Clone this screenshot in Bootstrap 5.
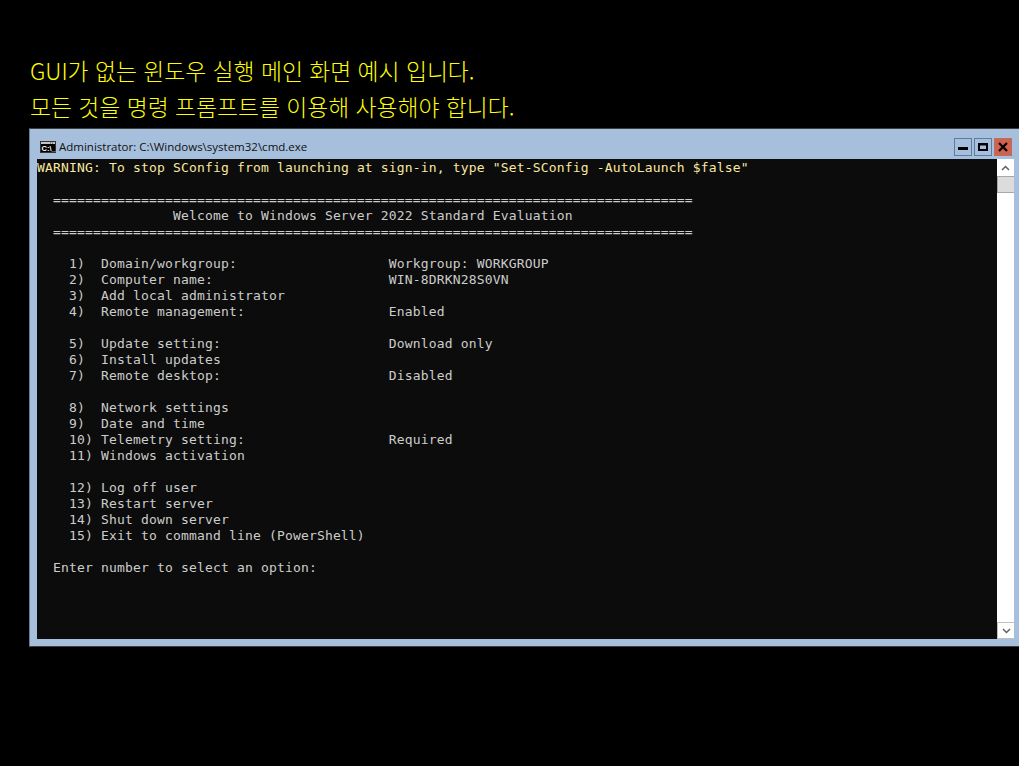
<!DOCTYPE html>
<html lang="ko">
<head>
<meta charset="utf-8">
<title>Windows Server Core SConfig</title>
<link href="https://cdn.jsdelivr.net/npm/bootstrap@5.3.0/dist/css/bootstrap.min.css" rel="stylesheet">
<style>
html,body{background:#000;height:100%;}
body{overflow:hidden;}
.caption-area{padding:53px 0 0 30px;height:128px;}
.caption-line{color:#ffff00;font-family:"Noto Sans CJK KR","Noto Sans",sans-serif;font-weight:300;font-size:22.8px;line-height:36px;margin:0;white-space:nowrap;}
.cmd-window{margin-left:29px;height:519px;background:#a6bfdc;border-top:1px solid #3c3c3c;border-left:1px solid #6b7a8c;border-bottom:1px solid #3c3c3c;}
.cmd-titlebar{height:30px;padding-left:10px;padding-right:7px;}
.cmd-title{font-family:"Open Sans","Liberation Sans",sans-serif;font-size:11.5px;color:#111;margin-left:3px;margin-top:10px;white-space:nowrap;line-height:16px;}
.cmd-icon{margin-top:12px;flex:none;}
.win-btn{width:18px;height:18px;border:1px solid #5f7c9e;margin-left:2px;margin-top:9px;padding:0;background:#a6bfdc;}
.win-btn svg{display:block;margin:0 auto;}
.win-btn-close{background:#d0624f;border-color:#b5735f;}
.cmd-body{padding-left:7px;}
.cmd-console{width:960px;height:480px;background:#0c0c0c;flex:none;overflow:hidden;}
.cmd-text{margin:0;padding:1px 0 0;color:#cccccc;font-family:"DejaVu Sans Mono",monospace;font-size:13px;letter-spacing:.17px;line-height:16px;overflow:hidden;}
.warn{color:#f9e8a0;}
.cmd-scroll{width:17px;height:480px;background:#fff;flex:none;}
.scroll-btn{height:17px;background:#fff;}
.scroll-thumb{height:17px;background:#dcdcdc;border:1px solid #a8a8a8;border-width:1px 0 1px 1px;}
.scroll-btn-down{border-top:1px solid #c0c0c0;border-left:1px solid #c0c0c0;border-bottom:1px solid #c0c0c0;}
</style>
</head>
<body class="m-0">
<header class="caption-area">
<p class="caption-line">GUI가 없는 윈도우 실행 메인 화면 예시 입니다.</p>
<p class="caption-line">모든 것을 명령 프롬프트를 이용해 사용해야 합니다.</p>
</header>
<section class="cmd-window">
<div class="cmd-titlebar d-flex align-items-start">
<svg class="cmd-icon" width="16" height="12" viewBox="0 0 16 12"><rect width="16" height="12" fill="#333"/><rect x="1" y="1" width="14" height="2" fill="#c4c4c4"/><rect x="10" y="1.500" width="1" height="1" fill="#444"/><rect x="12" y="1.500" width="1" height="1" fill="#444"/><rect x="1" y="3" width="14" height="8" fill="#000"/><text x="1.500" y="10" font-family="Liberation Sans" font-size="7.500" font-weight="700" fill="#fff">C:\_</text></svg>
<span class="cmd-title flex-grow-1">Administrator: C:\Windows\system32\cmd.exe</span>
<button class="win-btn" type="button" aria-label="Minimize"><svg width="10" height="10" viewBox="0 0 10 10"><rect x="0" y="5" width="10" height="3" fill="#000"/></svg></button>
<button class="win-btn" type="button" aria-label="Maximize"><svg width="10" height="10" viewBox="0 0 10 10"><path d="M0 1h10v8H0zM2 3.500v3.500h6V3.500z" fill="#000" fill-rule="evenodd"/></svg></button>
<button class="win-btn win-btn-close" type="button" aria-label="Close"><svg width="10" height="10" viewBox="0 0 10 10"><path d="M1 1l8 8M9 1l-8 8" stroke="#000" stroke-width="2.200" fill="none"/></svg></button>
</div>
<div class="cmd-body d-flex">
<div class="cmd-console"><pre class="cmd-text"><span class="warn">WARNING:</span><span class="warn"> To stop SConfig from launching at sign-in, type "Set-SConfig -AutoLaunch $false"</span>

  ================================================================================
                 Welcome to Windows Server 2022 Standard Evaluation
  ================================================================================

    1)  Domain/workgroup:                   Workgroup: WORKGROUP
    2)  Computer name:                      WIN-8DRKN28S0VN
    3)  Add local administrator
    4)  Remote management:                  Enabled

    5)  Update setting:                     Download only
    6)  Install updates
    7)  Remote desktop:                     Disabled

    8)  Network settings
    9)  Date and time
    10) Telemetry setting:                  Required
    11) Windows activation

    12) Log off user
    13) Restart server
    14) Shut down server
    15) Exit to command line (PowerShell)

  Enter number to select an option:</pre></div>
<div class="cmd-scroll d-flex flex-column">
<div class="scroll-btn d-flex align-items-center justify-content-center"><svg width="9" height="6" viewBox="0 0 9 6"><path d="M1 5l3.500-3.500L8 5" stroke="#606060" stroke-width="1.500" fill="none"/></svg></div>
<div class="scroll-thumb"></div>
<div class="flex-grow-1"></div>
<div class="scroll-btn scroll-btn-down d-flex align-items-center justify-content-center"><svg width="9" height="6" viewBox="0 0 9 6"><path d="M1 1l3.500 3.500L8 1" stroke="#606060" stroke-width="1.500" fill="none"/></svg></div>
</div>
</div>
</section>
</body>
</html>
